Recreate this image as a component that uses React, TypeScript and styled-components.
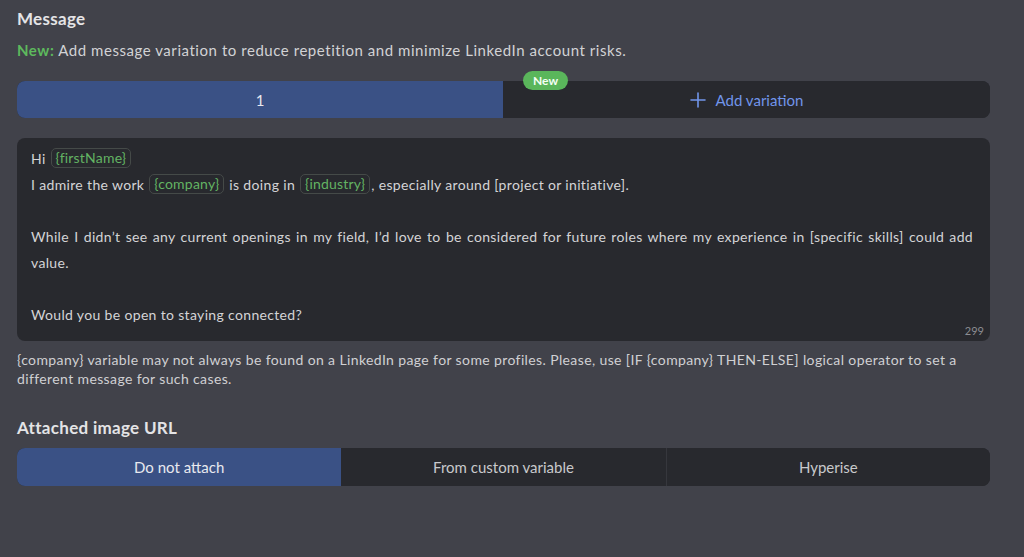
import React from "react";
import styled, { createGlobalStyle } from "styled-components";

const Global = createGlobalStyle`
  html, body {
    margin: 0;
    padding: 0;
    background: #41424a;
  }
  body {
    font-family: Lato, "Open Sans", "Liberation Sans", sans-serif;
    -webkit-font-smoothing: antialiased;
  }
`;

const Page = styled.div`
  width: 1024px;
  height: 557px;
  box-sizing: border-box;
  padding: 9px 34px 0 17px;
  background: #41424a;
  color: #d6d6d8;
`;

const SectionTitle = styled.h2<{ $top?: number }>`
  margin: ${(p) => p.$top ?? 0}px 0 0;
  font-size: 17px;
  line-height: 20px;
  font-weight: 700;
  color: #e4e4e6;
  letter-spacing: 0.3px;
`;

const Notice = styled.p`
  margin: 11px 0 0;
  font-size: 15px;
  line-height: 20px;
  letter-spacing: 0.55px;
  color: #d2d2d5;
`;

const NewLabel = styled.span`
  color: #5db95d;
  font-weight: 700;
`;

const Tabs = styled.div<{ $top: number; $cols: string; $height: number }>`
  position: relative;
  margin-top: ${(p) => p.$top}px;
  display: grid;
  grid-template-columns: ${(p) => p.$cols};
  height: ${(p) => p.$height}px;
  border-radius: 8px;
  background: #28292e;
`;

const Segment = styled.button<{ $active?: boolean; $first?: boolean; $last?: boolean; $divider?: boolean }>`
  all: unset;
  box-sizing: border-box;
  display: flex;
  align-items: center;
  justify-content: center;
  gap: 10px;
  font-family: inherit;
  font-size: 15px;
  color: ${(p) => (p.$active ? "#e8e9ef" : "#c9c9cc")};
  background: ${(p) => (p.$active ? "#3a5185" : "#28292e")};
  border-radius: ${(p) =>
    p.$first ? "8px 0 0 8px" : p.$last ? "0 8px 8px 0" : "0"};
  border-left: ${(p) => (p.$divider ? "1px solid #36373d" : "none")};
  cursor: pointer;
`;

const AddLabel = styled.span`
  color: #7195ea;
  font-size: 15px;
`;

const Badge = styled.span`
  position: absolute;
  top: -10px;
  left: 506px;
  height: 19px;
  padding: 0 10px;
  border-radius: 10px;
  background: #5ab65b;
  color: #f4fff4;
  font-size: 12px;
  font-weight: 700;
  line-height: 19px;
`;

const Editor = styled.div`
  position: relative;
  margin-top: 20px;
  box-sizing: border-box;
  padding: 8px 17px 13px 14px;
  background: #28292e;
  border-radius: 8px;
  font-size: 14px;
  line-height: 26px;
  letter-spacing: 0.34px;
  color: #d4d4d6;
`;

const Line = styled.div`
  text-align: justify;
  min-height: 26px;
`;

const Variable = styled.span`
  display: inline-block;
  box-sizing: border-box;
  height: 20px;
  line-height: 18px;
  padding: 0 4px;
  margin: 0 1px;
  border: 1px solid #454a48;
  border-radius: 5px;
  color: #63b363;
  vertical-align: 1px;
  letter-spacing: 0.2px;
`;

const Counter = styled.span`
  position: absolute;
  right: 6px;
  bottom: 3px;
  font-size: 11px;
  line-height: 14px;
  letter-spacing: 0;
  color: #8b8c91;
`;

const Hint = styled.p`
  margin: 9px 0 0;
  font-size: 14px;
  line-height: 19px;
  letter-spacing: 0.38px;
  color: #d0d0d3;
`;

const PlusIcon = () => (
  <svg width="16" height="16" viewBox="0 0 16 16" fill="none">
    <path d="M8 1v14M1 8h14" stroke="#7195ea" strokeWidth="1.6" strokeLinecap="round" />
  </svg>
);

const companyHint =
  "{company} variable may not always be found on a LinkedIn page for some profiles. Please, use [IF {company} THEN-ELSE] logical operator to set a different message for such cases.";

const imageOptions = ["Do not attach", "From custom variable", "Hyperise"];

export default function App() {
  return (
    <>
      <Global />
      <Page>
        <SectionTitle>Message</SectionTitle>
        <Notice>
          <NewLabel>New:</NewLabel> Add message variation to reduce repetition and minimize LinkedIn account risks.
        </Notice>

        <Tabs $top={21} $cols="486px 1fr" $height={37}>
          <Segment $active $first>1</Segment>
          <Segment $last>
            <PlusIcon />
            <AddLabel>Add variation</AddLabel>
          </Segment>
          <Badge>New</Badge>
        </Tabs>

        <Editor>
          <Line>
            Hi <Variable>{"{firstName}"}</Variable>
          </Line>
          <Line>
            I admire the work <Variable>{"{company}"}</Variable> is doing in{" "}
            <Variable>{"{industry}"}</Variable>, especially around [project or initiative].
          </Line>
          <Line />
          <Line>
            While I didn’t see any current openings in my field, I’d love to be considered for future roles where my
            experience in [specific skills] could add value.
          </Line>
          <Line />
          <Line>Would you be open to staying connected?</Line>
          <Counter>299</Counter>
        </Editor>

        <Hint>{companyHint}</Hint>

        <SectionTitle $top={30}>Attached image URL</SectionTitle>
        <Tabs $top={10} $cols="1fr 1fr 1fr" $height={38}>
          {imageOptions.map((label, i) => (
            <Segment
              key={label}
              $active={i === 0}
              $first={i === 0}
              $last={i === imageOptions.length - 1}
              $divider={i > 1}
            >
              {label}
            </Segment>
          ))}
        </Tabs>
      </Page>
    </>
  );
}
